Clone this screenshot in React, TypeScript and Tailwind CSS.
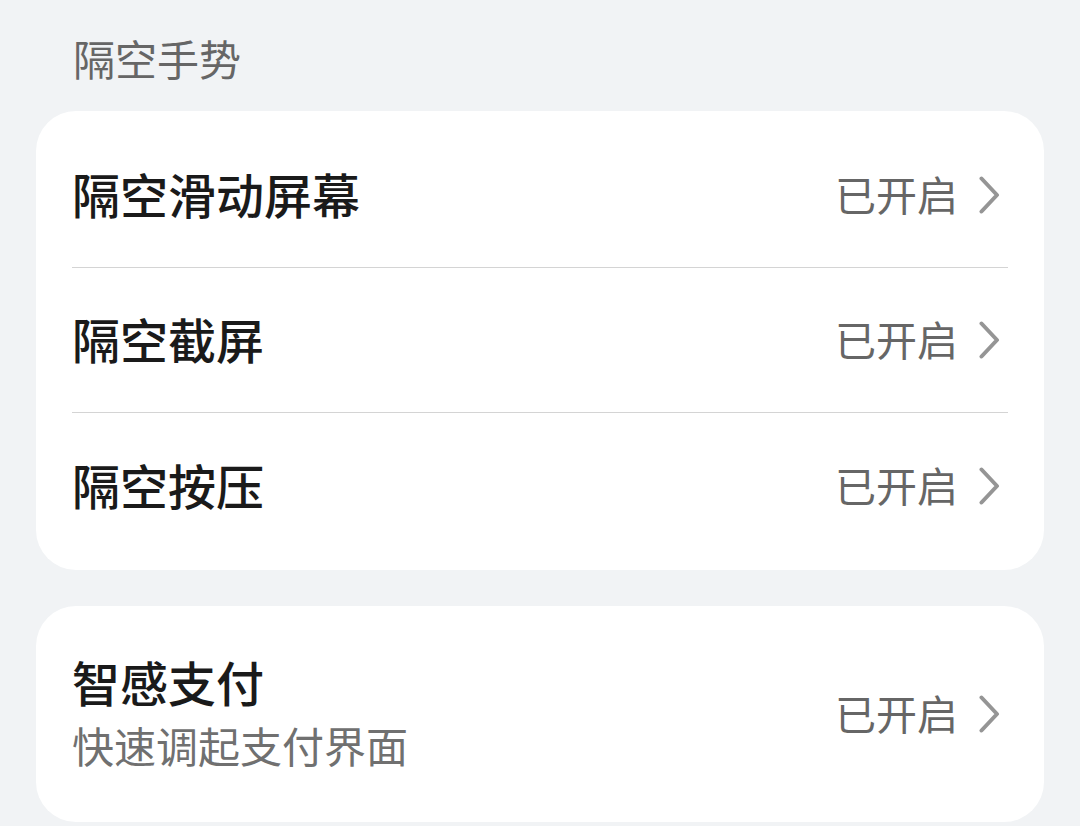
const font = { fontFamily: '"Noto Sans CJK SC", "Noto Sans", sans-serif' };

const Chevron = () => (
  <svg width="22" height="38" viewBox="0 0 22 38" fill="none" className="shrink-0">
    <path d="M3.5 2.5 L19 19 L3.5 35.5" stroke="#959595" strokeWidth="4" strokeLinecap="round" strokeLinejoin="round" />
  </svg>
);

const Status = () => (
  <div className="flex items-center gap-[20px]">
    <span className="pb-[3px] text-[41px] leading-none text-[#666666]">已开启</span>
    <Chevron />
  </div>
);

const rows = ["隔空滑动屏幕", "隔空截屏", "隔空按压"];

export default function App() {
  return (
    <div className="min-h-[826px] w-full bg-[#f1f3f5] px-9" style={font}>
      <div className="flex h-[111px] items-start pl-[37px] pt-[34px]">
        <span className="text-[42px] leading-[48px] text-[#666666]">隔空手势</span>
      </div>

      <div className="rounded-[40px] bg-white px-9 py-3">
        {rows.map((r, i) => (
          <div
            key={r}
            className={`flex h-[145px] items-center justify-between pr-2 ${i < rows.length - 1 ? "border-b border-[#d4d4d4]" : ""}`}
          >
            <span className="pb-[4px] text-[48px] font-medium leading-none text-[#1a1a1a]">{r}</span>
            <Status />
          </div>
        ))}
      </div>

      <div className="mt-9 flex h-[216px] items-center justify-between rounded-[40px] bg-white pl-9 pr-11">
        <div className="flex flex-col gap-[14px] pb-1">
          <span className="text-[48px] font-medium leading-[52px] text-[#1a1a1a]">智感支付</span>
          <span className="text-[42px] leading-[48px] text-[#707070]">快速调起支付界面</span>
        </div>
        <Status />
      </div>
    </div>
  );
}
